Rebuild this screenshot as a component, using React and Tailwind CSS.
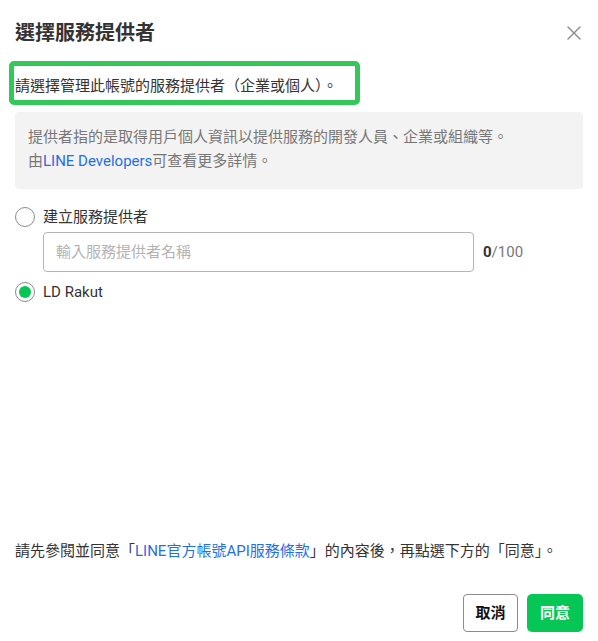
import React, { useState } from 'react';

const font = { fontFamily: 'Roboto, "Noto Sans CJK TC", sans-serif' };

const Radio = ({ checked, onClick, children }) => (
  <button type="button" onClick={onClick} className="flex items-center gap-2 h-[22px] text-left">
    <span className="w-5 h-5 rounded-full border border-[#8c8c8c] bg-white flex items-center justify-center shrink-0">
      {checked && <span className="w-3 h-3 rounded-full bg-[#06c755]" />}
    </span>
    <span className="text-[15px] leading-[22px] text-[#333]">{children}</span>
  </button>
);

export default function App() {
  const [selected, setSelected] = useState('rakut');
  const [name, setName] = useState('');

  return (
    <div style={font} className="w-[598px] h-[641px] bg-white flex flex-col px-[15px] pt-[19px] pb-[9px] text-[#333]">
      {/* header */}
      <div className="flex items-center justify-between h-7">
        <h2 className="text-[20px] leading-7 font-bold text-[#333]">選擇服務提供者</h2>
        <button type="button" className="w-6 h-6 flex items-center justify-center -mr-[3px] text-[#8a8a8a]">
          <svg width="16" height="16" viewBox="0 0 16 16" fill="none" stroke="currentColor" strokeWidth="1.4" strokeLinecap="round">
            <path d="M2 2l12 12M14 2L2 14" />
          </svg>
        </button>
      </div>

      {/* intro line with annotation frame */}
      <div className="relative mt-7">
        <p className="text-[15px] leading-[22px] text-[#333]">請選擇管理此帳號的服務提供者（企業或個人）。</p>
        <span className="absolute -left-[6px] -top-[14px] w-[351px] h-[44px] border-[5px] border-[#34c759] rounded-[5px] pointer-events-none" />
      </div>

      {/* info box */}
      <div className="mt-[15px] bg-[#f3f3f3] rounded-[4px] px-[13px] pt-[13px] pb-[16px] text-[15px] leading-6 text-[#777]">
        <p>提供者指的是取得用戶個人資訊以提供服務的開發人員、企業或組織等。</p>
        <p>
          由<a href="#" className="text-[#1f6fe5]">LINE Developers</a>可查看更多詳情。
        </p>
      </div>

      {/* options */}
      <div className="mt-[17px]">
        <Radio checked={selected === 'new'} onClick={() => setSelected('new')}>建立服務提供者</Radio>
        <div className="mt-[4px] ml-7 flex items-center gap-[9px]">
          <input
            value={name}
            onChange={(e) => setName(e.target.value)}
            placeholder="輸入服務提供者名稱"
            className="w-[431px] h-[40px] border border-[#b5b5b5] rounded-[4px] px-[12px] text-[15px] text-[#333] placeholder:text-[#b3b3b3] outline-none"
          />
          <span className="text-[15px] text-[#777]">
            <b className="text-[#333] font-bold">{name.length}</b>/100
          </span>
        </div>
        <div className="mt-[9px]">
          <Radio checked={selected === 'rakut'} onClick={() => setSelected('rakut')}>LD Rakut</Radio>
        </div>
      </div>

      <div className="flex-1" />

      {/* terms */}
      <p className="text-[15px] leading-[22px] text-[#333]">
        請先參閱並同意「<a href="#" className="text-[#1f6fe5]">LINE官方帳號API服務條款</a>」的內容後，再點選下方的「同意」。
      </p>

      <div className="mt-8 flex justify-end gap-[9px]">
        <button type="button" className="w-[55px] h-[38px] border border-[#8c8c8c] rounded-[4px] bg-white text-[15px] font-bold text-[#111]">
          取消
        </button>
        <button type="button" className="w-[56px] h-[38px] rounded-[5px] bg-[#06c755] text-[15px] font-bold text-white">
          同意
        </button>
      </div>
    </div>
  );
}
